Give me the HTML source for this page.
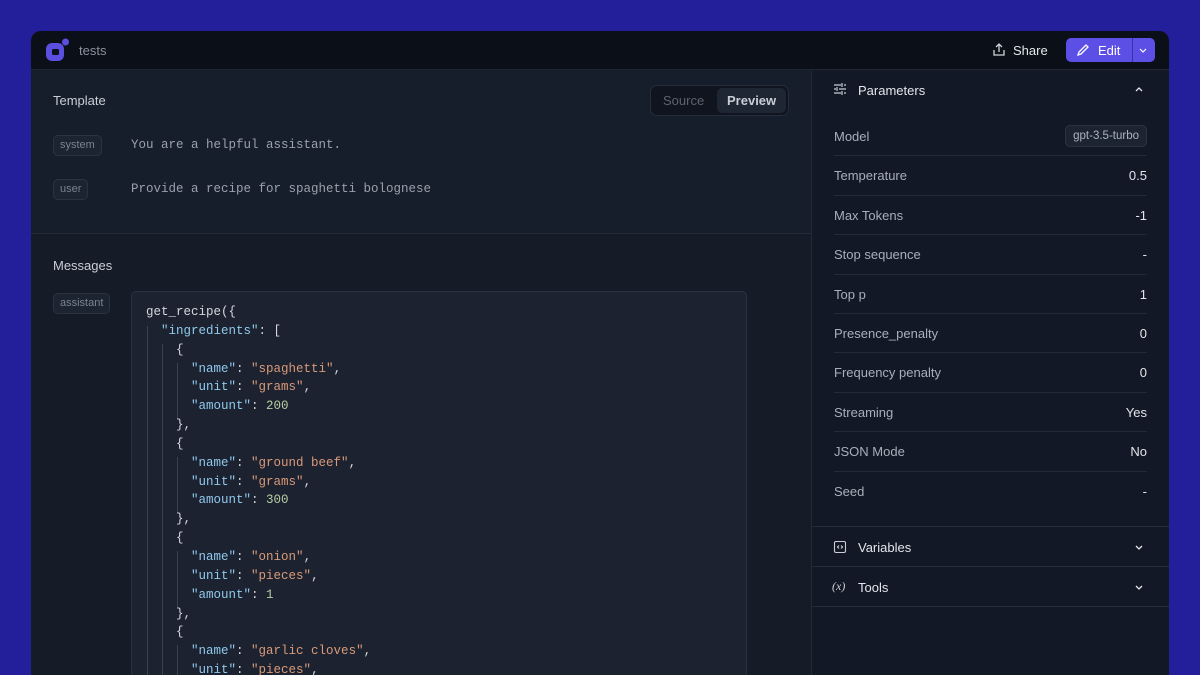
<!DOCTYPE html>
<html><head><style>
*{margin:0;padding:0;box-sizing:border-box}
body{width:1200px;height:675px;background:#231e99;font-family:"Liberation Sans",sans-serif;overflow:hidden;position:relative}
.win{position:absolute;left:31px;top:31px;width:1138px;height:644px;background:#161c29;border-radius:10px 10px 0 0;overflow:hidden}
.hdr{position:absolute;left:0;top:0;width:1138px;height:39px;background:#0b0f17;border-bottom:1px solid #1f2532}
.abs{position:absolute}
.left{position:absolute;left:0;top:40px;width:780px;height:604px;overflow:hidden}
.tpl{position:absolute;left:0;top:0;width:780px;height:163px;background:#171e2b;border-bottom:1px solid #232a37}
.msgs{position:absolute;left:0;top:163px;width:780px;height:500px;background:#151b27}
.right{position:absolute;left:780px;top:40px;width:358px;height:604px;background:#121826;border-left:1px solid #232a37}
.lbl{color:#c9ced6;font-size:13px}
.tag{position:absolute;border:1px solid #2b3240;background:#1c2331;border-radius:5px;color:#7b8290;font-size:11px;padding:0 6px;height:21px;line-height:19px}
.mono{font-family:"Liberation Mono",monospace;font-size:12.5px;color:#9ba1ab}
.row{position:absolute;left:22px;width:313px;height:39.4px;border-bottom:1px solid #232a37;font-size:13px;color:#a9afb9;line-height:39px}
.row span{position:absolute;right:0;color:#e3e6ea}
.code{position:absolute;left:100px;top:57px;width:616px;height:420px;background:#1c2230;border:1px solid #2a3140;border-radius:5px}
.code pre{font-family:"Liberation Mono",monospace;font-size:12.5px;line-height:18.85px;color:#d4d7dc;position:absolute;left:14px;top:11px}
.k{color:#8fc9ec}.s{color:#d99a78}.n{color:#b7cfa3}
.gl{position:absolute;width:1px;background:#3a4150}
</style></head><body>
<div class="win">
 <div class="hdr">
  <svg class="abs" style="left:13px;top:6px" width="26" height="26" viewBox="0 0 26 26"><rect x="2" y="6" width="18" height="18" rx="6" fill="#5b4fe0"/><rect x="8" y="12" width="7" height="6" rx="1.5" fill="#0b0f17"/><circle cx="21.5" cy="5" r="3.5" fill="#5b4fe0"/></svg>
  <div class="abs" style="left:48px;top:12px;color:#8a909c;font-size:13px">tests</div>
  <svg class="abs" style="left:960px;top:11px" width="16" height="16" viewBox="0 0 16 16" fill="none" stroke="#d0d4da" stroke-width="1.3"><path d="M8 10V2M5 5l3-3 3 3M3 8v5h10V8"/></svg>
  <div class="abs" style="left:982px;top:12px;color:#e3e6ea;font-size:13px">Share</div>
  <div class="abs" style="left:1035px;top:7px;width:89px;height:24px;background:#5b4fe6;border-radius:5px"></div>
  <div class="abs" style="left:1101px;top:7px;width:1px;height:24px;background:#3b30a8"></div>
  <svg class="abs" style="left:1045px;top:12px" width="14" height="14" viewBox="0 0 14 14" fill="none" stroke="#fff" stroke-width="1.3"><path d="M2 12l1-3 7-7 2 2-7 7z"/></svg>
  <div class="abs" style="left:1067px;top:12px;color:#fff;font-size:13px">Edit</div>
  <svg class="abs" style="left:1107px;top:14px" width="10" height="10" viewBox="0 0 10 10" fill="none" stroke="#fff" stroke-width="1.2"><path d="M2 4l3 3 3-3"/></svg>
 </div>
 <div class="left">
  <div class="tpl">
   <div class="abs lbl" style="left:22px;top:22px">Template</div>
   <div class="abs" style="left:619px;top:14px;width:139px;height:31px;background:#0f141e;border:1px solid #262d3a;border-radius:7px"></div>
   <div class="abs" style="left:686px;top:17px;width:69px;height:25px;background:#1e2533;border-radius:5px"></div>
   <div class="abs" style="left:632px;top:22px;font-size:13px;color:#5c6370">Source</div>
   <div class="abs" style="left:696px;top:22px;font-size:13px;color:#c9ced6;font-weight:bold">Preview</div>
   <div class="tag" style="left:22px;top:64px">system</div>
   <div class="abs mono" style="left:100px;top:67px">You are a helpful assistant.</div>
   <div class="tag" style="left:22px;top:108px">user</div>
   <div class="abs mono" style="left:100px;top:111px">Provide a recipe for spaghetti bolognese</div>
  </div>
  <div class="msgs">
   <div class="abs lbl" style="left:22px;top:24px">Messages</div>
   <div class="tag" style="left:22px;top:59px">assistant</div>
   <div class="code">
    <div class="gl" style="left:15px;top:34px;height:400px"></div>
    <div class="gl" style="left:30px;top:52px;height:400px"></div>
    <div class="gl" style="left:45px;top:71px;height:56px"></div>
    <div class="gl" style="left:45px;top:165px;height:56px"></div>
    <div class="gl" style="left:45px;top:259px;height:56px"></div>
    <div class="gl" style="left:45px;top:353px;height:80px"></div>
<pre>get_recipe({
  <span class="k">"ingredients"</span>: [
    {
      <span class="k">"name"</span>: <span class="s">"spaghetti"</span>,
      <span class="k">"unit"</span>: <span class="s">"grams"</span>,
      <span class="k">"amount"</span>: <span class="n">200</span>
    },
    {
      <span class="k">"name"</span>: <span class="s">"ground beef"</span>,
      <span class="k">"unit"</span>: <span class="s">"grams"</span>,
      <span class="k">"amount"</span>: <span class="n">300</span>
    },
    {
      <span class="k">"name"</span>: <span class="s">"onion"</span>,
      <span class="k">"unit"</span>: <span class="s">"pieces"</span>,
      <span class="k">"amount"</span>: <span class="n">1</span>
    },
    {
      <span class="k">"name"</span>: <span class="s">"garlic cloves"</span>,
      <span class="k">"unit"</span>: <span class="s">"pieces"</span>,</pre>
   </div>
  </div>
 </div>
 <div class="right">
  <svg class="abs" style="left:21px;top:11px" width="14" height="14" viewBox="0 0 14 14" fill="none" stroke="#c9ced6" stroke-width="1.2"><path d="M1 3h7M11 3h2M9 1v4M1 7h2M6 7h7M4 5v4M1 11h7M11 11h2M9 9v4"/></svg>
  <div class="abs" style="left:46px;top:12px;font-size:13px;color:#e3e6ea">Parameters</div>
  <svg class="abs" style="left:322px;top:14px" width="10" height="10" viewBox="0 0 10 10" fill="none" stroke="#e3e6ea" stroke-width="1.3"><path d="M2 6l3-3 3 3"/></svg>
  <div class="row" style="top:46px">Model<span style="top:8px;height:22px;line-height:20px;border:1px solid #2b3240;background:#1c2331;border-radius:5px;padding:0 7px;font-size:11.5px;color:#aeb4be">gpt-3.5-turbo</span></div>
  <div class="row" style="top:85.4px">Temperature<span>0.5</span></div>
  <div class="row" style="top:124.8px">Max Tokens<span>-1</span></div>
  <div class="row" style="top:164.2px">Stop sequence<span>-</span></div>
  <div class="row" style="top:203.6px">Top p<span>1</span></div>
  <div class="row" style="top:243px">Presence_penalty<span>0</span></div>
  <div class="row" style="top:282.4px">Frequency penalty<span>0</span></div>
  <div class="row" style="top:321.8px">Streaming<span>Yes</span></div>
  <div class="row" style="top:361.2px">JSON Mode<span>No</span></div>
  <div class="row" style="top:400.6px;border:none">Seed<span>-</span></div>
  <div class="abs" style="left:0;top:455px;width:358px;height:1px;background:#262d3a"></div>
  <svg class="abs" style="left:21px;top:469px" width="14" height="14" viewBox="0 0 14 14" fill="none" stroke="#c9ced6" stroke-width="1.1"><rect x="1.5" y="1.5" width="11" height="11" rx="1.5"/><path d="M6 5.5L4.5 7 6 8.5M8 5.5L9.5 7 8 8.5"/></svg>
  <div class="abs" style="left:46px;top:469px;font-size:13px;color:#e3e6ea">Variables</div>
  <svg class="abs" style="left:322px;top:471px" width="10" height="10" viewBox="0 0 10 10" fill="none" stroke="#e3e6ea" stroke-width="1.3"><path d="M2 4l3 3 3-3"/></svg>
  <div class="abs" style="left:0;top:495px;width:358px;height:1px;background:#262d3a"></div>
  <div class="abs" style="left:20px;top:508px;font-size:12px;color:#c9ced6;font-family:'Liberation Serif',serif;font-style:italic">(x)</div>
  <div class="abs" style="left:46px;top:509px;font-size:13px;color:#e3e6ea">Tools</div>
  <svg class="abs" style="left:322px;top:511px" width="10" height="10" viewBox="0 0 10 10" fill="none" stroke="#e3e6ea" stroke-width="1.3"><path d="M2 4l3 3 3-3"/></svg>
  <div class="abs" style="left:0;top:535px;width:358px;height:1px;background:#262d3a"></div>
 </div>
</div>
</body></html>
